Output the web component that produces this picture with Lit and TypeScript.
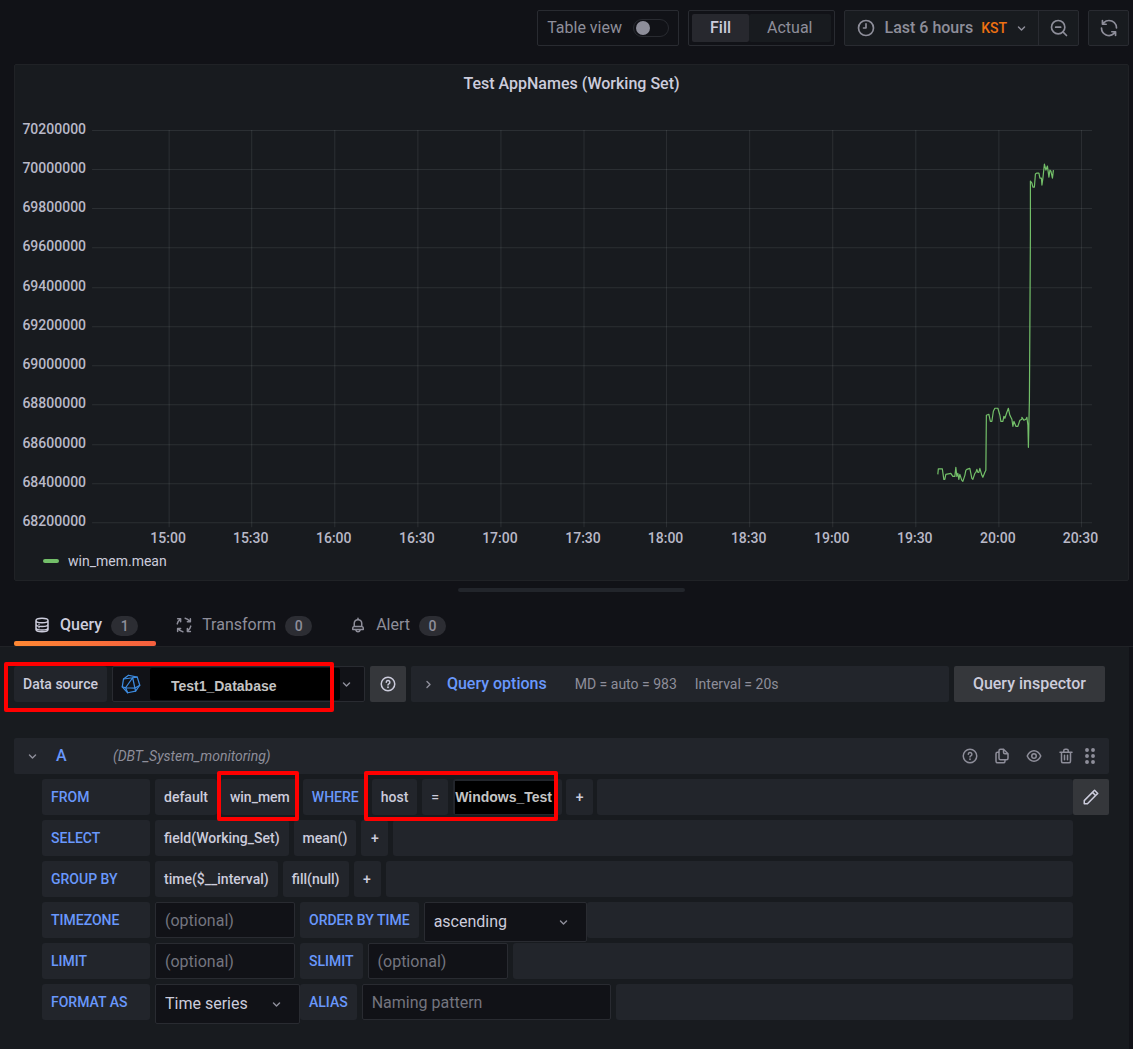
import { LitElement, css, html, svg, nothing } from "lit";
import { customElement, property } from "lit/decorators.js";

type Point = [number, number];

/* Icons are drawn on a 24 unit square. */
const ICONS: Record<string, unknown> = {
  "angle-down": svg`<path d="M17,9.17a1,1,0,0,0-1.41,0L12,12.71,8.46,9.17a1,1,0,0,0-1.41,0,1,1,0,0,0,0,1.42l4.24,4.24a1,1,0,0,0,1.42,0L17,10.59A1,1,0,0,0,17,9.17Z"/>`,
  "angle-right": svg`<path d="M14.83,11.29,10.59,7.05a1,1,0,0,0-1.42,0,1,1,0,0,0,0,1.41L12.71,12,9.17,15.54a1,1,0,0,0,0,1.41,1,1,0,0,0,.71.29,1,1,0,0,0,.71-.29l4.24-4.24A1,1,0,0,0,14.83,11.29Z"/>`,
  clock: svg`<g class="line"><circle cx="12" cy="12" r="9"/><path d="M12 7v5H9"/></g>`,
  "zoom-out": svg`<g class="line"><circle cx="11" cy="11" r="8"/><path d="M21 21l-4.300-4.300M8 11h6"/></g>`,
  sync: svg`<path d="M19.91,15.51H15.38a1,1,0,0,0,0,2h2.4A8,8,0,0,1,4,12a1,1,0,0,0-2,0,10,10,0,0,0,16.88,7.23V21a1,1,0,0,0,2,0V16.5A1,1,0,0,0,19.91,15.51ZM12,2A10,10,0,0,0,5.12,4.77V3a1,1,0,0,0-2,0V7.5a1,1,0,0,0,1,1h4.5a1,1,0,0,0,0-2H6.22A8,8,0,0,1,20,12a1,1,0,0,0,2,0A10,10,0,0,0,12,2Z"/>`,
  question: svg`<g class="line"><circle cx="12" cy="12" r="9"/><path d="M9.700 9.600a2.400 2.400 0 1 1 3.500 2.200c-.8.4-1.200.8-1.200 1.500"/></g><circle cx="12" cy="16.300" r="1.200"/>`,
  copy: svg`<path d="M21,8.94a1.31,1.31,0,0,0-.06-.27l0-.09a1.07,1.07,0,0,0-.19-.28h0l-6-6h0a1.07,1.07,0,0,0-.28-.19.32.32,0,0,0-.09,0A.88.88,0,0,0,14.05,2H10A3,3,0,0,0,7,5V6H6A3,3,0,0,0,3,9V19a3,3,0,0,0,3,3h8a3,3,0,0,0,3-3V18h1a3,3,0,0,0,3-3V9S21,9,21,8.94ZM15,5.410,17.590,8H16a1,1,0,0,1-1-1ZM15,19a1,1,0,0,1-1,1H6a1,1,0,0,1-1-1V9A1,1,0,0,1,6,8H7v7a3,3,0,0,0,3,3h5Zm4-4a1,1,0,0,1-1,1H10a1,1,0,0,1-1-1V5a1,1,0,0,1,1-1h3V7a3,3,0,0,0,3,3h3Z"/>`,
  eye: svg`<path d="M21.92,11.6C19.9,6.91,16.1,4,12,4S4.1,6.91,2.08,11.6a1,1,0,0,0,0,.8C4.1,17.09,7.9,20,12,20s7.9-2.91,9.92-7.6A1,1,0,0,0,21.92,11.6ZM12,18c-3.17,0-6.17-2.29-7.9-6C5.83,8.29,8.83,6,12,6s6.17,2.29,7.9,6C18.17,15.71,15.17,18,12,18ZM12,8a4,4,0,1,0,4,4A4,4,0,0,0,12,8Zm0,6a2,2,0,1,1,2-2A2,2,0,0,1,12,14Z"/>`,
  trash: svg`<path d="M10,18a1,1,0,0,0,1-1V11a1,1,0,0,0-2,0v6A1,1,0,0,0,10,18ZM20,6H16V5a3,3,0,0,0-3-3H11A3,3,0,0,0,8,5V6H4A1,1,0,0,0,4,8H5V19a3,3,0,0,0,3,3h8a3,3,0,0,0,3-3V8h1a1,1,0,0,0,0-2ZM10,5a1,1,0,0,1,1-1h2a1,1,0,0,1,1,1V6H10Zm7,14a1,1,0,0,1-1,1H8a1,1,0,0,1-1-1V8H17Zm-3-1a1,1,0,0,0,1-1V11a1,1,0,0,0-2,0v6A1,1,0,0,0,14,18Z"/>`,
  pen: svg`<path d="M22,7.24a1,1,0,0,0-.29-.71L17.47,2.29A1,1,0,0,0,16.76,2a1,1,0,0,0-.71.29L13.22,5.12h0L2.29,16.05a1,1,0,0,0-.29.71V21a1,1,0,0,0,1,1H7.24A1,1,0,0,0,8,21.71L18.87,10.78h0L21.71,8a1.19,1.19,0,0,0,.22-.33,1,1,0,0,0,0-.24.7.7,0,0,0,0-.14ZM6.83,20H4V17.17l9.93-9.93,2.83,2.83ZM18.17,8.66,15.34,5.83l1.42-1.41,2.82,2.82Z"/>`,
  bell: svg`<path d="M18,13.18V10a6,6,0,0,0-5-5.91V3a1,1,0,0,0-2,0V4.09A6,6,0,0,0,6,10v3.18A3,3,0,0,0,4,16v2a1,1,0,0,0,1,1H8.14a4,4,0,0,0,7.72,0H19a1,1,0,0,0,1-1V16A3,3,0,0,0,18,13.18ZM8,10a4,4,0,0,1,8,0v3H8Zm4,10a2,2,0,0,1-1.72-1h3.44A2,2,0,0,1,12,20Zm6-3H6V16a1,1,0,0,1,1-1H17a1,1,0,0,1,1,1Z"/>`,
  database: svg`<g class="line"><path d="M4 6c0-2 3.500-3 8-3s8 1 8 3v12c0 2-3.500 3-8 3s-8-1-8-3zM4 6c0 2 3.500 3 8 3s8-1 8-3M4 11c0 2 3.500 3 8 3s8-1 8-3M4 15.500c0 2 3.500 3 8 3s8-1 8-3"/></g><circle cx="8" cy="11" r="1"/><circle cx="8" cy="15.700" r="1"/>`,
  process: svg`<g class="line"><path d="M3 10.500A9.200 9.200 0 0 1 7 4.500M3.500 3.500H7.500V7.500M13.500 3A9.200 9.200 0 0 1 19.500 7M20.500 3.500V7.500H16.500M21 13.500A9.200 9.200 0 0 1 17 19.500M20.500 20.500H16.500V16.500M10.500 21A9.200 9.200 0 0 1 4.500 17M3.500 20.500V16.500H7.500"/></g>`,
  dots: svg`<circle cx="8" cy="4" r="2.600"/><circle cx="16" cy="4" r="2.600"/><circle cx="8" cy="12" r="2.600"/><circle cx="16" cy="12" r="2.600"/><circle cx="8" cy="20" r="2.600"/><circle cx="16" cy="20" r="2.600"/>`,
  influx: svg`<g class="thin"><path d="M9 1.500l10.500 2.300 3 9.700-5 7-9.500 2-6.500-7 1.500-9.500z"/><path d="M3 6l11-1.500 5.500-.7M14 4.500l3.500 16M14 4.500L5.500 16.500l2.500 6M5.500 16.500l-4-1M5.500 16.500l11 .5 6-3.500"/></g>`,
};

@customElement("ui-icon")
export class UiIcon extends LitElement {
  @property() name = "";

  static styles = css`
    :host {
      display: inline-flex;
      flex: none;
      width: 18px;
      height: 18px;
    }
    .icon {
      width: 100%;
      height: 100%;
      fill: currentColor;
    }
    .line,
    .thin {
      fill: none;
      stroke: currentColor;
      stroke-width: 2;
      stroke-linecap: round;
      stroke-linejoin: round;
    }
    .thin {
      stroke-width: 1.5;
    }
  `;

  render() {
    return html`<svg class="icon" viewBox="0 0 24 24" aria-hidden="true">${ICONS[this.name] ?? nothing}</svg>`;
  }
}

const Y_TICKS = [
  70200000, 70000000, 69800000, 69600000, 69400000, 69200000, 69000000, 68800000, 68600000, 68400000, 68200000,
];
const X_TICKS = [
  "15:00", "15:30", "16:00", "16:30", "17:00", "17:30", "18:00", "18:30", "19:00", "19:30", "20:00", "20:30",
];

const SERIES: Point[] = [
  [937, 474], [937.5, 468.5], [941.5, 468.5], [943, 479], [944, 479], [945, 474], [950, 473], [952, 476],
  [954, 476], [955, 467], [956, 476], [957, 473], [958, 479], [959, 474], [961, 480], [962, 481], [964, 475],
  [965, 470], [966, 469], [969, 468], [971, 478], [972, 479], [974, 473], [975, 472], [976, 469], [977, 472],
  [978, 472], [979, 468], [981, 475], [982, 477], [984, 472], [985, 470], [985.5, 415], [988, 414],
  [989.5, 421], [991, 421], [992.5, 411], [994, 408], [997, 408], [999, 415], [1000, 421], [1002, 421],
  [1003, 416], [1004, 418], [1006, 412], [1007.5, 408], [1009, 415], [1011, 419], [1012, 426], [1013, 421],
  [1015, 426], [1017, 426], [1019, 420], [1021, 419], [1021, 417], [1023, 420], [1025, 419], [1026, 417],
  [1027, 425], [1027.5, 447], [1028.5, 400], [1029, 320], [1029.5, 235], [1029.5, 181], [1031, 183],
  [1032, 187], [1033.5, 187], [1034.5, 174], [1036, 173], [1038, 173], [1039, 178], [1040.5, 178],
  [1041, 185], [1042, 178], [1043.5, 164], [1045, 170], [1046.5, 166], [1048, 177], [1049, 170], [1050, 171],
  [1051.5, 178], [1052.5, 170],
];

@customElement("time-chart")
export class TimeChart extends LitElement {
  static styles = css`
    :host {
      display: block;
    }
    .chart {
      display: block;
      width: 100%;
      height: auto;
    }
    .grid {
      stroke: rgba(240, 250, 255, 0.09);
      stroke-width: 1;
    }
    .tick {
      font: 500 14px Roboto, sans-serif;
      fill: #b9b9c8;
    }
    .y {
      text-anchor: end;
    }
    .x {
      text-anchor: middle;
    }
    .series {
      fill: none;
      stroke: #73bf69;
      stroke-width: 1.2;
      stroke-linejoin: round;
    }
  `;

  render() {
    const yAt = (i: number) => Math.floor(130 + i * 39.25) + 0.5;
    const xAt = (i: number) => Math.floor((169 + i * 82.9) * 2) / 2;
    return html`
      <svg class="chart" viewBox="15 104 1112 442" role="img" aria-label="Test AppNames (Working Set)">
        ${Y_TICKS.map(
          (v, i) => svg`
            <line class="grid" x1="92" x2="1091" y1=${yAt(i)} y2=${yAt(i)}></line>
            <text class="tick y" x="86" y=${yAt(i) + 3.5}>${v}</text>`,
        )}
        ${X_TICKS.map(
          (t, i) => svg`
            <line class="grid" x1=${xAt(i)} x2=${xAt(i)} y1="130" y2="527"></line>
            <text class="tick x" x=${xAt(i) - 1} y="543">${t}</text>`,
        )}
        <polyline class="series" points=${SERIES.map((p) => p.join(",")).join(" ")}></polyline>
      </svg>
    `;
  }
}

@customElement("app-root")
export class AppRoot extends LitElement {
  static styles = css`
    :host {
      display: flex;
      flex-direction: column;
      min-height: 100vh;
      background: #111217;
      color: #ccccdc;
      font: 400 16px/24px Roboto, "Liberation Sans", sans-serif;
      --panel: #181b1f;
      --raised: #22252b;
      --line: #292b31;
      --muted: #8e8e9a;
      --link: #6998fc;
    }
    * {
      box-sizing: border-box;
    }
    button,
    input,
    select {
      margin: 0;
      font: inherit;
      color: inherit;
      border-radius: 2px;
    }
    button {
      display: flex;
      align-items: center;
      justify-content: center;
      border: 0;
      padding: 0;
      background: none;
      cursor: pointer;
      white-space: nowrap;
    }
    select {
      appearance: none;
      border: 0;
      background: none;
    }

    .toolbar {
      display: flex;
      justify-content: flex-end;
      gap: 9px;
      padding: 10px 4px 0 14px;
      color: var(--muted);
    }
    .box {
      display: flex;
      align-items: center;
      height: 36px;
      border: 1px solid var(--line);
      border-radius: 2px;
    }
    .switch-box {
      gap: 11px;
      padding: 0 9px;
    }
    .switch {
      appearance: none;
      display: flex;
      align-items: center;
      width: 36px;
      height: 18px;
      padding: 0 2px;
      border: 1px solid var(--line);
      border-radius: 9px;
    }
    .switch::before {
      content: "";
      width: 14px;
      height: 14px;
      border-radius: 50%;
      background: var(--muted);
    }
    .radios {
      margin: 0;
      padding: 3px;
    }
    .radio {
      display: flex;
      align-items: center;
      height: 28px;
      padding: 0 18px;
      border-radius: 2px;
      background: var(--panel);
    }
    .radio input {
      appearance: none;
      width: 0;
      height: 0;
    }
    .radio:has(:checked) {
      background: #27282e;
      color: #ccccdc;
      font-weight: 500;
    }
    .picker {
      background: var(--panel);
      font-weight: 500;
    }
    .picker button {
      height: 34px;
    }
    .range {
      gap: 9px;
      padding: 0 8px 0 11px;
    }
    .zone {
      margin: 0 -4px 0 -2px;
      padding: 0 1px;
      color: #ee7112;
      font-size: 14px;
    }
    .picker .zoom {
      width: 40px;
      border-left: 1px solid var(--line);
      border-radius: 0;
    }
    .refresh {
      width: 41px;
      background: var(--panel);
    }
    .big {
      width: 20px;
      height: 20px;
    }

    .panel {
      margin: 18px 4px 0 14px;
      padding-bottom: 4px;
      border: 1px solid #202226;
      border-radius: 2px;
      background: var(--panel);
    }
    .title {
      margin: 0;
      padding-bottom: 1px;
      font-size: 16px;
      font-weight: 500;
      line-height: 38px;
      text-align: center;
    }
    .legend {
      display: flex;
      align-items: center;
      gap: 9px;
      height: 30px;
      padding-left: 28px;
      font-size: 14px;
    }
    .swatch {
      width: 16px;
      height: 4px;
      border-radius: 2px;
      background: #73bf69;
    }
    .splitter {
      align-self: center;
      width: 20%;
      height: 4px;
      margin: 7px 4px 0 14px;
      border-radius: 2px;
      background: var(--raised);
    }

    .tabs {
      display: flex;
      height: 55px;
      padding-left: 14px;
      border-bottom: 1px solid #202226;
    }
    .tab {
      position: relative;
      gap: 9px;
      height: 54px;
      padding: 12px 18px 0 19px;
      border-radius: 0;
      color: var(--muted);
    }
    .tab[aria-selected="true"] {
      color: #ccccdc;
      font-weight: 500;
    }
    .tab[aria-selected="true"]::after {
      content: "";
      position: absolute;
      inset: auto 0 0;
      height: 5px;
      border-radius: 2px;
      background: linear-gradient(90deg, #ff8833, #f55f3e);
    }
    .count {
      min-width: 27px;
      height: 20px;
      margin-top: 2px;
      border-radius: 10px;
      background: #2c2d33;
      color: var(--muted);
      font-size: 14px;
      font-weight: 500;
      line-height: 20px;
    }

    .editor {
      flex: 1;
      margin-right: 4px;
      padding: 19px 20px 28px 14px;
      background: var(--panel);
    }
    .source-row {
      display: flex;
      gap: 5px;
      padding-right: 4px;
    }
    .cell {
      display: flex;
      flex: none;
      align-items: center;
      height: 36px;
      padding: 0 9px;
      border-radius: 3px;
      background: var(--raised);
      font-size: 14px;
      font-weight: 500;
    }
    .marked {
      position: relative;
      display: flex;
      flex: none;
      gap: 5px;
    }
    .mark {
      position: absolute;
      border: 4px solid #ff0000;
      border-radius: 2px;
      pointer-events: none;
    }
    .mark-source {
      inset: -4px 31px -10px -10px;
    }
    .mark-measure {
      inset: -8px 0 -6px -4px;
    }
    .mark-filter {
      inset: -8px 4px -6px -8px;
    }
    .source {
      display: flex;
      align-items: center;
      width: 253px;
      height: 36px;
      border: 1px solid var(--line);
      border-radius: 2px;
      background: #111217;
    }
    .source .logo {
      width: 20px;
      height: 20px;
      margin: 0 9px 0 8px;
      color: #3d8be0;
    }
    .source select {
      flex: 1;
      height: 32px;
      padding: 4px 21px 0;
      background: #000;
      font: 700 14px "Liberation Sans", sans-serif;
      color: #c4c4c4;
    }
    .chevron {
      width: 17px;
      height: 17px;
      color: var(--muted);
    }
    .source .chevron {
      margin: 0 9px 0 -2px;
    }
    .solid {
      flex: none;
      width: 36px;
      height: 36px;
      background: #35373b;
    }
    .inspector {
      width: auto;
      padding: 0 19px;
      font-weight: 500;
    }
    .options {
      display: flex;
      flex: 1;
      align-items: center;
      justify-content: flex-start;
      height: 36px;
      padding: 0 9px;
      background: var(--raised);
      color: var(--muted);
      font-size: 14px;
    }
    .options-title {
      margin: 0 28px 0 10px;
      color: var(--link);
      font-size: 16px;
      font-weight: 500;
    }
    .interval {
      margin-left: 18px;
    }

    .query-head {
      display: flex;
      align-items: center;
      height: 36px;
      margin-top: 36px;
      padding-right: 10px;
      border-radius: 2px;
      background: var(--raised);
      color: var(--muted);
    }
    .query-head .chevron {
      margin: 0 15px 0 10px;
    }
    .ref {
      width: 57px;
      color: var(--link);
      font-weight: 500;
    }
    .db {
      flex: 1;
      font-size: 14px;
      font-style: italic;
    }
    .actions {
      display: flex;
      align-items: center;
      gap: 14px;
    }
    .actions .drag {
      margin-left: -8px;
    }

    .body {
      display: flex;
      align-items: flex-start;
      padding: 5px 0 0 28px;
    }
    .rows {
      display: flex;
      flex: 1;
      flex-direction: column;
      gap: 5px;
    }
    .row {
      display: flex;
      gap: 5px;
      height: 36px;
    }
    .from {
      gap: 4px;
    }
    .key {
      color: var(--link);
    }
    .lead {
      width: 108px;
    }
    .from .lead {
      margin-right: 1px;
    }
    .fill {
      flex: 1;
      border-radius: 3px;
      background: var(--raised);
    }
    .add {
      width: 27px;
    }
    .value {
      width: 109px;
      padding: 0 2px;
      justify-content: flex-start;
    }
    .redacted {
      display: flex;
      align-items: center;
      width: 99px;
      height: 33px;
      background: #000;
      color: #c4c4c4;
      font: 700 14px "Liberation Sans", sans-serif;
    }
    .field {
      width: 140px;
      height: 36px;
      padding: 0 9px;
      border: 1px solid var(--line);
      background: #111217;
    }
    .field::placeholder {
      color: #74757f;
      opacity: 1;
    }
    .wide {
      width: 249px;
    }
    .picklist {
      display: flex;
      align-items: center;
      width: 163px;
      height: 40px;
      margin-right: -5px;
      border: 1px solid var(--line);
      border-radius: 2px;
      background: #111217;
    }
    .picklist select {
      flex: 1;
      min-width: 0;
      height: 38px;
      padding: 0 9px;
    }
    .picklist .chevron {
      flex: none;
      margin-right: 14px;
    }
    .format {
      width: 145px;
    }
  `;

  private seg(text: string) {
    return html`<button class="cell">${text}</button>`;
  }

  private add() {
    return html`<button class="cell add">+</button>`;
  }

  private tab(icon: string, text: string, count: number, selected = false) {
    return html`
      <button class="tab" role="tab" aria-selected=${selected ? "true" : "false"}>
        <ui-icon name=${icon}></ui-icon>${text}<span class="count">${count}</span>
      </button>
    `;
  }

  render() {
    return html`
      <header class="toolbar">
        <label class="box switch-box">Table view <input class="switch" type="checkbox" role="switch" /></label>
        <div class="box radios" role="radiogroup" aria-label="Panel size">
          <label class="radio"><input type="radio" name="size" checked />Fill</label>
          <label class="radio"><input type="radio" name="size" />Actual</label>
        </div>
        <div class="box picker">
          <button class="range">
            <ui-icon class="big" name="clock"></ui-icon>Last 6 hours
            <span class="zone">KST</span>
            <ui-icon class="chevron" name="angle-down"></ui-icon>
          </button>
          <button class="zoom" aria-label="Zoom out"><ui-icon class="big" name="zoom-out"></ui-icon></button>
        </div>
        <button class="box refresh" aria-label="Refresh"><ui-icon class="big" name="sync"></ui-icon></button>
      </header>

      <section class="panel">
        <h1 class="title">Test AppNames (Working Set)</h1>
        <time-chart></time-chart>
        <div class="legend"><span class="swatch"></span>win_mem.mean</div>
      </section>
      <div class="splitter"></div>

      <nav class="tabs" role="tablist">
        ${this.tab("database", "Query", 1, true)} ${this.tab("process", "Transform", 0)}
        ${this.tab("bell", "Alert", 0)}
      </nav>

      <main class="editor">
        <div class="source-row">
          <div class="marked">
            <label class="cell" for="source">Data source</label>
            <div class="source">
              <ui-icon class="logo" name="influx"></ui-icon>
              <select id="source"><option>Test1_Database</option></select>
              <ui-icon class="chevron" name="angle-down"></ui-icon>
            </div>
            <span class="mark mark-source"></span>
          </div>
          <button class="solid" aria-label="Data source help"><ui-icon name="question"></ui-icon></button>
          <button class="options">
            <ui-icon class="chevron" name="angle-right"></ui-icon>
            <span class="options-title">Query options</span>
            <span>MD = auto = 983</span>
            <span class="interval">Interval = 20s</span>
          </button>
          <button class="solid inspector">Query inspector</button>
        </div>

        <div class="query-head">
          <ui-icon class="chevron" name="angle-down"></ui-icon>
          <span class="ref">A</span>
          <span class="db">(DBT_System_monitoring)</span>
          <div class="actions">
            <button aria-label="Help"><ui-icon name="question"></ui-icon></button>
            <button aria-label="Duplicate query"><ui-icon name="copy"></ui-icon></button>
            <button aria-label="Toggle query"><ui-icon name="eye"></ui-icon></button>
            <button aria-label="Remove query"><ui-icon name="trash"></ui-icon></button>
            <button class="drag" aria-label="Move query"><ui-icon name="dots"></ui-icon></button>
          </div>
        </div>

        <div class="body">
          <div class="rows">
            <div class="row from">
              <span class="cell key lead">FROM</span>
              ${this.seg("default")}
              <div class="marked">${this.seg("win_mem")}<span class="mark mark-measure"></span></div>
              <span class="cell key">WHERE</span>
              <div class="marked">
                ${this.seg("host")} ${this.seg("=")}
                <button class="cell value"><span class="redacted">Windows_Test</span></button>
                <span class="mark mark-filter"></span>
              </div>
              ${this.add()}
              <div class="fill"></div>
            </div>
            <div class="row">
              <span class="cell key lead">SELECT</span>
              ${this.seg("field(Working_Set)")} ${this.seg("mean()")} ${this.add()}
              <div class="fill"></div>
            </div>
            <div class="row">
              <span class="cell key lead">GROUP BY</span>
              ${this.seg("time($__interval)")} ${this.seg("fill(null)")} ${this.add()}
              <div class="fill"></div>
            </div>
            <div class="row">
              <label class="cell key lead" for="timezone">TIMEZONE</label>
              <input class="field" id="timezone" placeholder="(optional)" />
              <label class="cell key" for="order">ORDER BY TIME</label>
              <div class="picklist">
                <select id="order"><option>ascending</option><option>descending</option></select>
                <ui-icon class="chevron" name="angle-down"></ui-icon>
              </div>
              <div class="fill"></div>
            </div>
            <div class="row">
              <label class="cell key lead" for="limit">LIMIT</label>
              <input class="field" id="limit" placeholder="(optional)" />
              <label class="cell key" for="slimit">SLIMIT</label>
              <input class="field" id="slimit" placeholder="(optional)" />
              <div class="fill"></div>
            </div>
            <div class="row">
              <label class="cell key lead" for="format">FORMAT AS</label>
              <div class="picklist format">
                <select id="format"><option>Time series</option><option>Table</option><option>Logs</option></select>
                <ui-icon class="chevron" name="angle-down"></ui-icon>
              </div>
              <label class="cell key" for="alias">ALIAS</label>
              <input class="field wide" id="alias" placeholder="Naming pattern" />
              <div class="fill"></div>
            </div>
          </div>
          <button class="solid" aria-label="Edit as text"><ui-icon name="pen"></ui-icon></button>
        </div>
      </main>
    `;
  }
}
